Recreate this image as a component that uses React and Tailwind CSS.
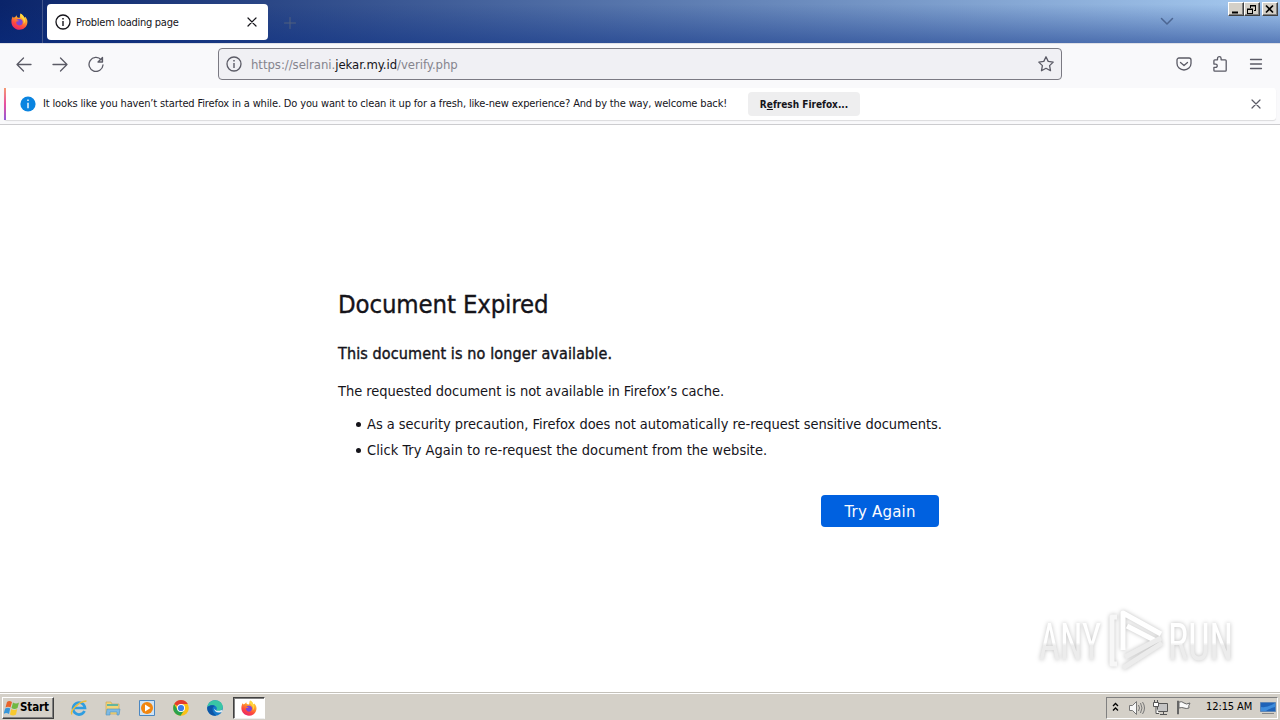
import React from "react";

const FONT = "font-['DejaVu_Sans_Condensed','DejaVu_Sans',sans-serif] [font-stretch:condensed]";

const FirefoxLogo = ({ size }) => (
    <svg width={size} height={size} viewBox="0 0 16 16" className="shrink-0">
        <defs>
            <linearGradient id="fox" x1="0.8" y1="0" x2="0.3" y2="1">
                <stop offset="0" stopColor="#ffe14a" />
                <stop offset="0.4" stopColor="#ff9a2b" />
                <stop offset="0.7" stopColor="#ff4a3d" />
                <stop offset="1" stopColor="#e6246e" />
            </linearGradient>
        </defs>
        <path d="M1.6 3.2 2.6 4.5 4.2 3.6 5.2 2.2 5.8 4 8 4.6 9 0.4C11 1.4 12 3 12.4 4.4L13.4 3.5C15 5.4 15.8 7.2 15.4 9.4 14.8 13.2 11.8 15.7 8 15.7 3.9 15.7.6 12.6.4 8.6.3 6.5.8 4.6 1.6 3.2Z" fill="url(#fox)" />
        <path d="M5.1 6.6C6.2 5.5 9.4 5.2 10.6 7 11.8 9 10.4 11.8 7.9 11.7 5.6 11.6 4.4 9.6 5.1 8.1L7.4 7.8C7.8 7.2 6 7 5.1 6.6Z" fill="#7b46d8" />
        <path d="M9 0.4C8 2.6 9.4 4 10.8 5.2 12.4 6.8 12.3 9 11.6 10.4 13.8 8.6 13.6 5.6 12.3 4.2 12 3 11 1.4 9 0.4Z" fill="#ffd83f" />
    </svg>
);

const InfoIcon = ({ color }) => (
    <svg width="16" height="16" viewBox="0 0 16 16" className="shrink-0" fill="none" stroke={color} strokeWidth="1.3">
        <circle cx="8" cy="8" r="7" />
        <path d="M8 7v5" strokeWidth="1.4" />
        <path d="M8 4v1.5" strokeWidth="1.5" />
    </svg>
);

const Line = ({ d, size = 16, color = "#5b5b66", width = 1.3, className = "" }) => (
    <svg width={size} height={size} viewBox="0 0 16 16" fill="none" stroke={color} strokeWidth={width} strokeLinecap="round" strokeLinejoin="round" className={`shrink-0 ${className}`}>
        <path d={d} />
    </svg>
);

const WindowButton = ({ children }) => (
    <div className="w-4 h-[14px] bg-[#d4d0c8] border border-t-white border-l-white border-r-[#404040] border-b-[#404040] shadow-[inset_-1px_-1px_0_#808080] flex items-center justify-center">
        <svg width="12" height="11" viewBox="0 0 12 11" fill="none" stroke="#000">{children}</svg>
    </div>
);

const TitleBar = () => (
    <div className="h-[43px] flex items-start bg-[linear-gradient(to_right,#0a246a,#a6caf0)] relative">
        <div className="absolute inset-0 bg-[linear-gradient(to_bottom,transparent_10%,rgba(10,45,130,0.5))]" />
        <div className="relative w-[43px] h-[43px] border-r border-[#42568c] flex items-center pl-[11px]">
            <FirefoxLogo size={17} />
        </div>
        <div className="relative mt-1 ml-1 w-[221px] h-9 bg-white rounded-[4px] flex items-center pl-2">
            <InfoIcon color="#15141a" />
            <span className="ml-[5px] pt-[2px] text-[11px] tracking-[-0.27px] text-[#15141a] whitespace-nowrap">Problem loading page</span>
            <Line d="M4 4l8 8M12 4l-8 8" color="#15141a" width="1.2" className="ml-auto mr-2" />
        </div>
        <Line d="M8 2.5v11M2.5 8h11" color="#51617f" width="1" className="relative ml-[14px] mt-[15px]" />
        <Line d="M2.5 5.5 8 11l5.500-5.500" color="#4c6692" width="1.5" className="relative ml-auto mr-[53px] mt-[13px]" />
        <div className="relative flex mt-[2px] mr-[2px]">
            <WindowButton><path d="M2 8.500h6" strokeWidth="2" /></WindowButton>
            <WindowButton>
                <path d="M4 1.500h6M4.500 1v3M9.500 1v5M8 6.500h2M1.500 5v5M1 5h6M6.500 5v5M1 9.500h6" />
                <path d="M4 2h6M1 5.500h6" />
            </WindowButton>
            <div className="w-[2px]" />
            <WindowButton><path d="M2 1.500l7 7M9 1.500l-7 7" strokeWidth="1.7" /></WindowButton>
        </div>
    </div>
);

const NavBar = () => (
    <div className="h-[45px] bg-[#f9f9fb] border-t border-[#dfe0e6] flex items-center pl-4 pr-4 pb-[4px]">
        <Line d="M1 8.500h14M7.500 2 1 8.500l6.500 6.500" />
        <Line d="M1 8.500h14M8.500 2 15 8.500l-6.500 6.500" className="ml-5" />
        <Line d="M13.200 3.700A7 7 0 1 0 15 9M14.500 1.500v4.500h-4.500z" className="ml-5" />
        <div className="ml-[114px] w-[844px] h-8 rounded-[4px] border border-[#7b7a83] bg-[#f0f0f4] flex items-center px-[7px]">
            <InfoIcon color="#5b5b66" />
            <span className="ml-[9px] pt-[2px] text-[13px] tracking-[-0.04px] text-[#85848d] whitespace-nowrap">
                https://selrani.<span className="text-[#15141a]">jekar.my.id</span>/verify.php
            </span>
            <Line d="M8 .8 10.200 5.400 15.200 6.100 11.600 9.600 12.500 14.700 8 12.300 3.500 14.700 4.400 9.600.8 6.100 5.800 5.400Z" className="ml-auto" />
        </div>
        <Line d="M3 2h10a2 2 0 0 1 2 2v3.500a7 6.500 0 0 1-14 0V4a2 2 0 0 1 2-2ZM4.500 6.500 8 9.500l3.500-3" className="ml-auto" />
        <Line d="M5.500 3.800V2.500a1.700 1.700 0 0 1 3.600 0v1.300h4.200q.9 0 .9.900v9.600q0 .9-.9.900H2.800q-.9 0-.9-.9v-2.900h1.700a1.600 1.600 0 0 0 0-3.300H1.900V4.700q0-.9.9-.9z" className="ml-5" />
        <Line d="M2.500 3.500h11M2.500 8h11M2.500 12.500h11" className="ml-5" />
    </div>
);

const Notification = () => (
    <div className="h-[37px] bg-[#f9f9fb] border-b border-[#cccccf] px-1">
        <div className="h-8 bg-white rounded-[3px] shadow-[0_1px_1px_rgba(0,0,0,0.12)] flex items-center relative">
            <div className="w-[2px] h-8 bg-[linear-gradient(to_bottom,#f59a72,#e84fa0,#9059d8)]" />
            <svg width="16" height="16" viewBox="0 0 16 16" className="ml-[14px]">
                <circle cx="8" cy="8" r="7.600" fill="#0a84e0" />
                <path d="M8 3.500v1.600M8 6.800v5.400" stroke="#fff" strokeWidth="1.400" />
            </svg>
            <span className="ml-[7px] w-[705px] text-[11px] tracking-[-0.148px] text-[#15141a] whitespace-nowrap">
                It looks like you haven’t started Firefox in a while. Do you want to clean it up for a fresh, like-new experience? And by the way, welcome back!
            </span>
            <button className="w-28 h-6 rounded-[4px] bg-[#eeeeef] text-[10px] font-bold text-[#15141a] whitespace-nowrap">
                R<span className="underline">e</span>fresh Firefox...
            </button>
            <Line d="M4 4l8 8M12 4l-8 8" width="1.2" className="ml-auto mr-3" />
        </div>
    </div>
);

const ErrorPage = () => (
    <div className="flex-1 bg-white relative pl-[338px] pt-[161px] text-[#15141a]">
        <h1 className="text-[25.5px] leading-9 tracking-[-0.14px] whitespace-nowrap [-webkit-text-stroke:0.35px_#15141a]">Document Expired</h1>
        <h2 className="mt-[22px] text-[16px] leading-5 tracking-[0.12px] whitespace-nowrap [-webkit-text-stroke:0.4px_#15141a]">This document is no longer available.</h2>
        <p className="mt-[17px] text-[14.5px] leading-5 tracking-[-0.04px] whitespace-nowrap">The requested document is not available in Firefox’s cache.</p>
        <ul className="mt-[10px] pl-[29px] text-[14.5px] leading-[26px] whitespace-nowrap">
            <li className="flex items-center tracking-[-0.03px]">
                <span className="w-[5px] h-[5px] rounded-full bg-[#15141a] -ml-[11px] mr-[6px]" />
                As a security precaution, Firefox does not automatically re-request sensitive documents.
            </li>
            <li className="flex items-center tracking-[0.03px]">
                <span className="w-[5px] h-[5px] rounded-full bg-[#15141a] -ml-[11px] mr-[6px]" />
                Click Try Again to re-request the document from the website.
            </li>
        </ul>
        <button className="mt-8 ml-[483px] w-[118px] h-8 pt-[2px] rounded-[4px] bg-[#0061e0] font-['DejaVu_Sans',sans-serif] [font-stretch:normal] text-[15px] tracking-[0.2px] text-[#fbfbfe]">Try Again</button>
        <Watermark />
    </div>
);

const Watermark = () => (
    <svg width="230" height="80" viewBox="1020 600 230 80" className="absolute left-[1020px] top-[475px] overflow-visible drop-shadow-[0_0_2px_rgba(0,0,0,0.25)]">
        <defs>
            <linearGradient id="fade" x1="0" y1="0" x2="0" y2="1">
                <stop offset="0.5" stopColor="#fff" />
                <stop offset="0.55" stopColor="#ececec" />
            </linearGradient>
        </defs>
        <g fill="url(#fade)" fontFamily="Roboto, sans-serif" fontSize="52">
            <text x="1039" y="660" textLength="62" lengthAdjust="spacingAndGlyphs">ANY</text>
            <text x="1168" y="660" textLength="65" lengthAdjust="spacingAndGlyphs">RUN</text>
        </g>
        <g fill="none" strokeWidth="5" strokeLinejoin="round">
            <path d="M1117 617h-5v47h5" stroke="#f7f7f7" />
            <path d="M1123 650v-37l38 21M1127 626l29 15" stroke="#fff" />
            <path d="M1161 638l-36 19M1162 643l-39 25" stroke="#ececec" />
        </g>
    </svg>
);

const IeIcon = () => (
    <svg width="18" height="18" viewBox="0 0 18 18" fill="none">
        <path d="M14.500 12A6 6 0 1 1 15 9H4" stroke="#2f9de0" strokeWidth="2.700" />
        <path d="M2 15.500C-1 13 8 2.500 16.500 2" stroke="#edbd37" strokeWidth="1.500" />
    </svg>
);

const FolderIcon = () => (
    <svg width="18" height="18" viewBox="0 0 18 18">
        <path d="M2 3h5l1 2h7v10H2z" fill="#f3d579" stroke="#c9a24a" strokeWidth=".6" />
        <path d="M3 5h11v2H3z" fill="#64b5a0" />
        <path d="M3 10h13l-1 6h-2v-3H6v3H2z" fill="#7db9e4" stroke="#4f93c4" strokeWidth=".6" />
    </svg>
);

const MediaIcon = () => (
    <svg width="18" height="18" viewBox="0 0 18 18">
        <path d="M1.500 1.500h15v15h-15z" fill="#cfe3f5" stroke="#4b87c1" />
        <circle cx="9" cy="9" r="6" fill="#f2860f" />
        <path d="M7 5.500 12.500 9 7 12.500z" fill="#fff" />
    </svg>
);

const ChromeIcon = () => (
    <svg width="18" height="18" viewBox="0 0 18 18">
        <circle cx="9" cy="9" r="7.800" fill="#fbc116" />
        <path d="M9 9 2.200 5.100A7.800 7.800 0 0 1 15.800 5.100L9 5.100z" fill="#e33b2e" />
        <path d="M9 9 5.600 11 2.200 5.100A7.800 7.800 0 0 0 8.500 16.800L12.400 11z" fill="#2ba24c" />
        <circle cx="9" cy="9" r="4" fill="#fff" />
        <circle cx="9" cy="9" r="3.100" fill="#3b7de8" />
    </svg>
);

const EdgeIcon = () => (
    <svg width="18" height="18" viewBox="0 0 18 18">
        <circle cx="9" cy="9" r="7.800" fill="#1479cb" />
        <path d="M1.300 8C2 3.500 5.500 1.200 9 1.200c4.500 0 7.800 3 7.800 6.800 0 2.500-2 4-4.500 4-2 0-2.500-1-1.500-2 .8-3.500-5-5.500-9.500-2Z" fill="#39c6a5" />
        <path d="M1.300 8C4 5.500 8 6 9 7.200 5.500 7.500 5.500 13 10.500 16.600 5 17.500.5 13 1.300 8Z" fill="#0d56a6" />
        <path d="M8.200 9.500C8 12.500 11 14.500 15.500 13l1.500-1-1.500-1C12 12.500 9.500 12 8.200 9.500Z" fill="#e4eef4" />
    </svg>
);

const TrayIcons = () => (
    <div className="flex items-center">
        <svg width="9" height="16" viewBox="0 0 9 16" fill="none" stroke="#000" strokeWidth="1.300">
            <path d="M2 6 4.500 3.500 7 6M2 10.500 4.500 8 7 10.500" />
        </svg>
        <svg width="18" height="18" viewBox="0 0 18 18" className="ml-2" fill="none" stroke="#777">
            <path d="M1.500 6.500h3l4-4v13l-4-4h-3z" fill="#f7f7f7" />
            <path d="M10.500 6q2 3 0 6M12.500 4q3 5 0 10M14.500 3q4 6 0 12" />
        </svg>
        <svg width="18" height="18" viewBox="0 0 18 18" className="ml-[6px]" fill="none" stroke="#555">
            <path d="M5.500 4.500h10v8h-10zM8 15.500h7M11.500 13v2" fill="#c4c4c4" />
            <path d="M1.500 3.500h5v4h-5zM2.500 1v2M5.500 1v2M4 7.500v7h3" fill="#fff" />
        </svg>
        <svg width="18" height="18" viewBox="0 0 18 18" className="ml-[5px]" fill="#fafafa" stroke="#666">
            <path d="M2.500 2v13h1V2zM4 3q3-1 5 1t6 0q-2 3-1 5-3 1-5 0T4 9z" />
        </svg>
    </div>
);

const TaskBar = () => (
    <div className="h-[28px] bg-[#d4d0c8] border-t border-[#c4c1ba] shadow-[inset_0_1px_0_#fff] flex items-center pl-[2px] pr-[2px]">
        <div className="w-[52px] h-[22px] mt-[2px] bg-[#d4d0c8] border border-t-white border-l-white border-r-[#404040] border-b-[#404040] shadow-[inset_-1px_-1px_0_#808080] flex items-center pl-[1px]">
            <svg width="16" height="16" viewBox="0 0 16 16" className="shrink-0">
                <path d="M3 2q2-2 5 0L6.500 7.500Q4 6 1.500 7.500z" fill="#e8632b" />
                <path d="M9 2.500q3 2 6 0L13.500 8q-3 2-6 0z" fill="#71b842" />
                <path d="M1.200 8.500q3-1.500 5 0L5 14q-3-2-5.500 0z" fill="#3796da" />
                <path d="M7.200 9q3 2 6 0L12 14.500q-3 2-6 0z" fill="#f8c92e" />
            </svg>
            <span className="text-[11.5px] font-bold tracking-[-0.1px]">Start</span>
        </div>
        <div className="ml-4 flex items-center gap-[16px] mt-[2px]">
            <IeIcon />
            <FolderIcon />
            <MediaIcon />
            <ChromeIcon />
            <EdgeIcon />
        </div>
        <div className="ml-[9px] mt-[2px] w-8 h-[22px] bg-white border border-t-[#404040] border-l-[#404040] border-r-white border-b-[#eee] shadow-[inset_1px_1px_0_#808080] flex items-center justify-center">
            <FirefoxLogo size={16} />
        </div>
        <div className="ml-auto mt-[2px] w-[172px] h-[22px] border border-t-[#808080] border-l-[#808080] border-r-white border-b-white flex items-center pl-1">
            <TrayIcons />
            <span className="ml-[13px] text-[11px] tracking-[-0.1px] whitespace-nowrap">12:15 AM</span>
            <svg width="16" height="14" viewBox="0 0 16 14" className="ml-auto mr-[1px]">
                <path d="M.5 1.500h15v9H.5z" fill="#1f63b8" stroke="#5d85b5" />
                <path d="M1 10V6Q8 7 15 2v4Q8 8 6 10z" fill="#3e8cdb" />
                <path d="M2 12.500h12" stroke="#888" />
            </svg>
        </div>
    </div>
);

const App = () => {
    return (
        <div className={`w-[1280px] h-[720px] overflow-hidden flex flex-col bg-white text-black ${FONT}`}>
            <TitleBar />
            <NavBar />
            <Notification />
            <ErrorPage />
            <TaskBar />
        </div>
    );
};

export default App;
